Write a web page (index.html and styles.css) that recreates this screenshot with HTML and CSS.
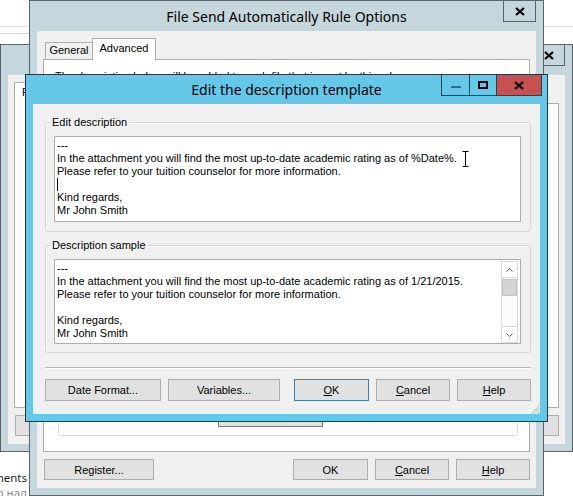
FILE: index.html
```html
<!DOCTYPE html>
<html>
<head>
<meta charset="utf-8">
<link rel="stylesheet" href="styles.css">
</head>
<body>
<div class="desk">
  <div class="bg-list"><div class="bg-row"></div></div>
  <div class="bg-text">
    <div class="bg-line">Components</div>
    <div class="bg-line light">Отчёт о над</div>
  </div>

  <!-- back window -->
  <div class="win win-a">
    <div class="titlebar">
      <div class="title">Rule Options</div>
      <div class="close-btn"><svg width="10" height="9" viewBox="0 0 10 9"><path d="M1 1L9 8M9 1L1 8" stroke="#000" stroke-width="2.2"/></svg></div>
    </div>
    <div class="win-body">
      <div class="tabs"><div class="tab sel first">Files</div><div class="tab tab-gen">General</div></div>
      <div class="tab-panel">
        <div class="panel-inner-a"></div>
      </div>
      <div class="btn-row">
        <button class="btn btn-reg">Register...</button>
        <span class="spacer"></span>
        <button class="btn btn-ok">OK</button>
        <button class="btn btn-std"><u>C</u>ancel</button>
        <button class="btn btn-std"><u>H</u>elp</button>
      </div>
    </div>
  </div>

  <!-- middle window -->
  <div class="win win-b">
    <div class="titlebar">
      <div class="title">File Send Automatically Rule Options</div>
      <div class="close-btn"><svg width="10" height="9" viewBox="0 0 10 9"><path d="M1 1L9 8M9 1L1 8" stroke="#000" stroke-width="2.2"/></svg></div>
    </div>
    <div class="win-body">
      <div class="tabs"><div class="tab tab-gen">General</div><div class="tab sel tab-adv">Advanced</div></div>
      <div class="tab-panel">
        <div class="panel-intro">The description below will be added to each file that is sent by this rule.</div>
        <div class="gbox"><div class="gbox-btn">Edit...</div></div>
      </div>
      <div class="btn-row">
        <button class="btn btn-reg">Register...</button>
        <span class="spacer"></span>
        <button class="btn btn-ok">OK</button>
        <button class="btn btn-std"><u>C</u>ancel</button>
        <button class="btn btn-std"><u>H</u>elp</button>
      </div>
    </div>
  </div>

  <!-- active dialog -->
  <div class="dlg">
    <div class="titlebar dlg-titlebar">
      <div class="title">Edit the description template</div>
      <div class="caps">
        <div class="cap cap-min"><span class="min-glyph"></span></div>
        <div class="cap cap-max"><span class="max-glyph"></span></div>
        <div class="cap cap-close"><svg width="10" height="9" viewBox="0 0 10 9"><path d="M1 1L9 8M9 1L1 8" stroke="#000" stroke-width="2.2"/></svg></div>
      </div>
    </div>
    <div class="dlg-body">
      <fieldset class="grp grp-edit">
        <legend>Edit description</legend>
        <div class="tbox tbox-edit">
          <div class="ln">---</div>
          <div class="ln">In the attachment you will find the most up-to-date academic rating as of %Date%.</div>
          <div class="ln">Please refer to your tuition counselor for more information.</div>
          <div class="ln"><span class="caret"></span></div>
          <div class="ln">Kind regards,</div>
          <div class="ln">Mr John Smith</div>
        </div>
      </fieldset>
      <fieldset class="grp grp-sample">
        <legend>Description sample</legend>
        <div class="tbox tbox-sample">
          <div class="tbox-text">
            <div class="ln">---</div>
            <div class="ln">In the attachment you will find the most up-to-date academic rating as of 1/21/2015.</div>
            <div class="ln">Please refer to your tuition counselor for more information.</div>
            <div class="ln">&nbsp;</div>
            <div class="ln">Kind regards,</div>
            <div class="ln">Mr John Smith</div>
          </div>
          <div class="vscroll">
            <div class="sb-arrow sb-up"><svg width="7" height="4" viewBox="0 0 7 4"><path d="M0.5 3.5L3.5 0.5L6.5 3.5" fill="none" stroke="#606060"/></svg></div>
            <div class="sb-thumb"></div>
            <div class="sb-track"></div>
            <div class="sb-arrow sb-down"><svg width="7" height="4" viewBox="0 0 7 4"><path d="M0.5 0.5L3.5 3.5L6.5 0.5" fill="none" stroke="#606060"/></svg></div>
          </div>
        </div>
      </fieldset>
      <div class="sep"></div>
      <div class="dlg-btns">
        <button class="btn btn-date">Date Format...</button>
        <button class="btn btn-vars">Variables...</button>
        <span class="spacer"></span>
        <button class="btn btn-ok default"><u>O</u>K</button>
        <button class="btn btn-std"><u>C</u>ancel</button>
        <button class="btn btn-std"><u>H</u>elp</button>
      </div>
      <svg class="grip" width="10" height="10" viewBox="0 0 10 10"><path d="M9.5 1.5L1.5 9.5M9.5 4.5L4.5 9.5M9.5 7.5L7.5 9.5" stroke="#b5b5b5" stroke-width="1"/></svg>
    </div>
  </div>

  <svg class="ibeam" width="9" height="18" viewBox="0 0 9 18"><path d="M1.5 1.5h6M4.5 1.5v15M1.5 16.5h6" stroke="#fff" stroke-width="3"/><path d="M1.5 1.5h6M4.5 1.5v15M1.5 16.5h6" stroke="#000" stroke-width="1"/></svg>
</div>
</body>
</html>
```
FILE: styles.css
```css
* { box-sizing: border-box; }
html, body { margin: 0; padding: 0; }
body {
  width: 573px; height: 496px; overflow: hidden; background: #fff;
  font-family: "Liberation Sans", Arial, sans-serif; font-size: 11px; color: #000;
}
.desk { position: relative; width: 573px; height: 496px; overflow: hidden; }

/* desktop remnants */
.bg-list { position: absolute; left: 0; top: 26px; width: 573px; border-top: 1px solid #e1e1e1; }
.bg-row { width: 32px; height: 7px; border-bottom: 1px solid #d2d2d2; }
.bg-text { position: absolute; left: 0; top: 470px; width: 27px; overflow: hidden;
  font-family: "Noto Sans", sans-serif; font-size: 11.5px; line-height: 15px; color: #1e1e1e; }
.bg-line { display: flex; justify-content: flex-end; white-space: nowrap; height: 15px; overflow: hidden; }
.bg-line.light { color: #8c8c8c; }

/* windows */
.win, .dlg { position: absolute; display: flex; flex-direction: column; }
.win { border: 1px solid #56646c; background: #c5d6dc; padding: 0 7px 7px; }
.win-a { left: 0; top: 44px; width: 573px; height: 408px; z-index: 1; }
.win-b { left: 29px; top: 0; width: 515px; height: 496px; z-index: 2; }

.titlebar { flex: none; height: 30px; display: grid; grid-template-columns: 1fr auto 1fr; }
.title { grid-column: 2; align-self: center; white-space: nowrap;
  font-family: "Noto Sans", sans-serif; font-size: 14px; color: #000; }
.close-btn { grid-column: 3; justify-self: end; align-self: start; width: 33px; height: 21px;
  border: 1px solid #56646c; border-top: none; display: flex; align-items: center; justify-content: center; }

.win-body { flex: 1; min-height: 0; background: #f0f0f0; display: flex; flex-direction: column; }
.tabs { flex: none; height: 28px; display: flex; align-items: flex-end; padding-left: 8px; }
.tab { height: 17px; border: 1px solid #adadad; border-bottom: none; background: #f0f0f0;
  line-height: 15px; text-align: center; white-space: nowrap; }
.tab.sel { height: 22px; background: #fff; margin-bottom: -1px; padding-top: 2px; position: relative; z-index: 1; }
.tab.first { margin-left: -2px; padding: 2px 8px 0 7px; text-align: left; }
.tab-gen { width: 47px; border-right: none; }
.tab.first + .tab-gen { border-left: none; border-right: 1px solid #adadad; }
.tab-adv { width: 64px; }

.tab-panel { flex: 1; min-height: 0; margin: 0 6px; background: #fff; border: 1px solid #adadad;
  display: flex; flex-direction: column; }
.panel-intro { padding: 10px 11px 0; line-height: 13px; white-space: nowrap; }
.gbox { flex: 1; margin: 17px 11px 15px 14px; border: 1px solid #dcdcdc; border-radius: 3px;
  display: flex; flex-direction: column; justify-content: flex-end; padding: 0 0 8px 159px; }
.gbox-btn { width: 105px; height: 22px; border: 1px solid #7a7a7a; background: #e1e1e1;
  display: flex; align-items: center; justify-content: center; }
.panel-inner-a { flex: 1; margin: 0 5px 0 auto; width: 7px; border-left: 1px solid #c8c8c8; }

.btn-row { flex: none; display: flex; gap: 7px; padding: 7px 6px 8px 7px; }
.spacer { flex: 1; }
.btn { height: 21px; margin: 0; padding: 0; border: 1px solid #adadad; background: #e1e1e1;
  font-family: "Liberation Sans", Arial, sans-serif; font-size: 11px; color: #000;
  display: flex; align-items: center; justify-content: center; }
.btn u { text-decoration: underline; }
.btn-reg { width: 110px; }
.btn-ok { width: 75px; }
.btn-std { width: 74px; }
.btn.default { border-color: #3c7fb1; }

/* active dialog */
.dlg { left: 25px; top: 74px; width: 523px; height: 348px; border: 1px solid #27383f;
  background: #64c8e9; padding: 0 7px 7px; z-index: 3; }
.dlg-titlebar { height: 29px; }
.caps { grid-column: 3; justify-self: end; align-self: start; display: flex; margin-right: -2px; }
.cap { height: 21px; border-left: 1px solid #27404a; border-bottom: 1px solid #27404a;
  display: flex; align-items: center; justify-content: center; }
.cap-min { width: 28px; }
.cap-max { width: 27px; }
.cap-close { width: 46px; border-right: 1px solid #27404a; background: #c75050; }
.min-glyph { width: 10px; height: 2px; background: #2f6b7b; margin-top: 3px; }
.max-glyph { width: 10px; height: 8px; border: 2px solid #000; }

.dlg-body { flex: 1; min-height: 0; position: relative; background: #f0f0f0;
  padding: 12px 9px 12px 12px; display: flex; flex-direction: column; }
.grp { margin: 0; min-width: 0; padding: 7px 9px 9px 8px; border: 1px solid #d5d5d5; border-radius: 3px;
  box-shadow: inset 1px 1px 0 #fff; }
.grp legend { padding: 0 2px; margin-left: -4px; line-height: 13px; }
.grp-sample { margin-top: 7px; padding-bottom: 8px; }

.tbox { border: 1px solid #abadb3; background: #fff; line-height: 13px; white-space: nowrap; overflow: hidden; }
.tbox-edit { height: 86px; padding: 2px 3px 0 2px; }
.tbox-sample { height: 85px; display: flex; }
.tbox-text { flex: 1; min-width: 0; padding: 2px 3px 0 2px; overflow: hidden; }
.ln { height: 13px; }
.caret { display: inline-block; width: 1px; height: 13px; background: #000; vertical-align: top; }

.vscroll { flex: none; width: 17px; margin: 1px 2px 0 0; border: 1px solid #dadada; background: #fbfbfb;
  display: flex; flex-direction: column; }
.sb-arrow { flex: none; height: 16px; display: flex; align-items: center; justify-content: center; background: #fff; }
.sb-up { border-bottom: 1px solid #dadada; }
.sb-down { border-top: 1px solid #dadada; }
.sb-thumb { flex: none; height: 17px; margin: 1px 0 0; background: #d4d4d4; border: 1px solid #c4c4c4; }
.sb-track { flex: 1; }

.sep { flex: none; margin-top: 14px; height: 2px; border-top: 1px solid #b9b9b9; border-bottom: 1px solid #fff; }
.dlg-btns { flex: none; margin-top: 10px; display: flex; gap: 7px; }
.dlg-btns .btn { height: 22px; }
.btn-date { width: 116px; }
.btn-vars { width: 112px; }
.grip { position: absolute; right: 0; bottom: 0; }

.ibeam { position: absolute; left: 461px; top: 150px; z-index: 4; }
```
